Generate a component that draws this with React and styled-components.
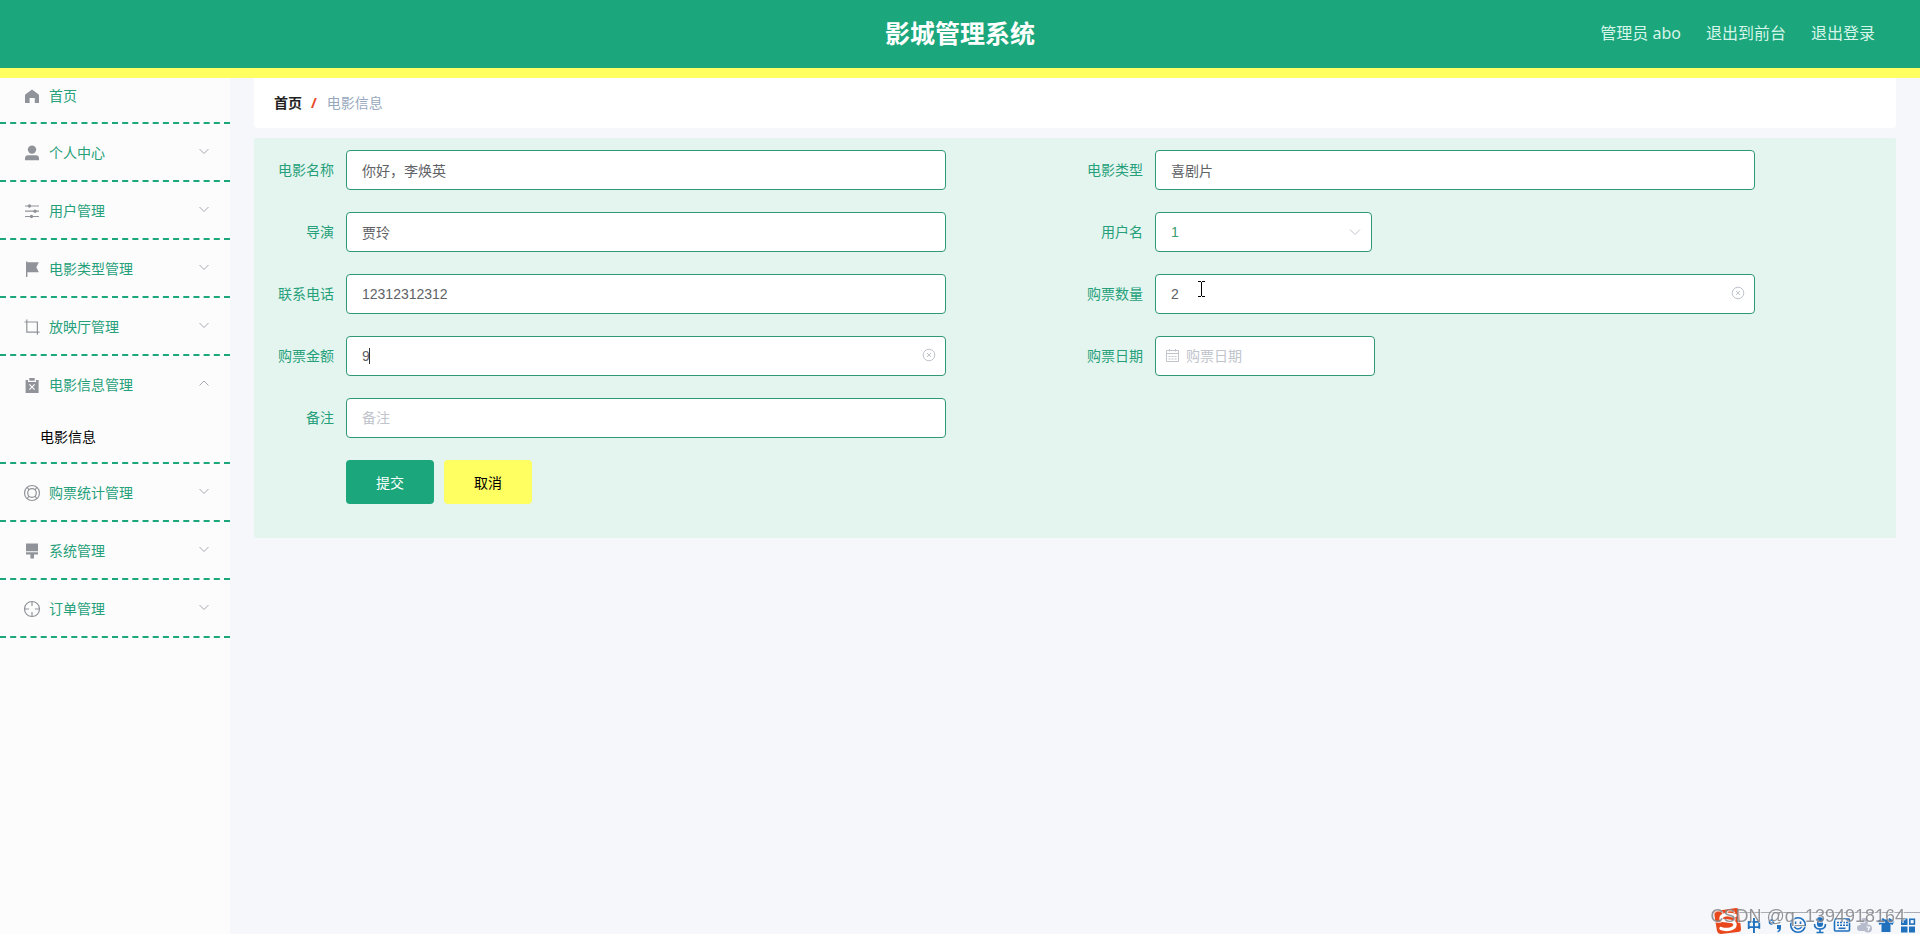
import React from "react";
import styled, { createGlobalStyle } from "styled-components";

const GREEN = "#1ba77b";
const TEXT_GREEN = "#26a07a";
const YELLOW = "#ffff62";

const GlobalStyle = createGlobalStyle`
  *, *::before, *::after { box-sizing: border-box; }
  body {
    margin: 0;
    background: #f5f7fb;
    font-family: "Noto Sans", "Noto Sans CJK SC", sans-serif;
    font-size: 14px;
    color: #303133;
  }
  a { color: inherit; text-decoration: none; }
`;

const Page = styled.div`
  min-height: 100vh;
  display: flex;
  flex-direction: column;
`;

const Header = styled.header`
  display: grid;
  grid-template-columns: 1fr auto 1fr;
  align-items: center;
  height: 78px;
  padding-bottom: 2px;
  background: ${GREEN};
  border-bottom: 10px solid ${YELLOW};
`;

const Title = styled.h1`
  grid-column: 2;
  margin: 0;
  font-size: 25px;
  line-height: 36px;
  font-weight: 700;
  color: #fff;
`;

const HeaderLinks = styled.nav`
  display: flex;
  justify-content: flex-end;
  gap: 25px;
  padding-right: 45px;
  font-size: 16px;
  line-height: 24px;
  color: #d6f5ea;
`;

const Body = styled.div`
  flex: 1;
  display: flex;
`;

const Sidebar = styled.nav`
  flex: none;
  width: 230px;
  background: #fcfcfc;
`;

const MenuGroup = styled.div`
  border-bottom: 2px dashed ${GREEN};
`;

const MenuItem = styled.a`
  display: flex;
  align-items: center;
  gap: 8px;
  height: ${(p) => (p.$first ? 44 : 56)}px;
  padding: ${(p) => (p.$first ? "0 20px 8px 23px" : "2px 20px 0 23px")};
  line-height: 20px;
  color: ${TEXT_GREEN};
`;

const MenuLabel = styled.span`
  flex: 1;
`;

const SubItem = styled.a`
  display: block;
  height: 50px;
  padding-left: 40px;
  line-height: 50px;
  color: #000;
`;

const Icon = styled.svg`
  flex: none;
  display: block;
  width: 18px;
  height: 18px;
  fill: none;
  stroke: #909399;
  stroke-width: 1.2;
`;

const Chevron = styled.svg`
  flex: none;
  display: block;
  width: 12px;
  height: 12px;
  margin-bottom: 4px;
  fill: none;
  stroke: #a6a9b0;
`;

const Main = styled.main`
  flex: 1;
  min-width: 0;
  padding: 0 24px 24px;
`;

const Breadcrumb = styled.nav`
  display: flex;
  align-items: center;
  height: 50px;
  padding: 0 20px;
  background: #fff;
  border-radius: 0 0 4px 4px;
  line-height: 20px;
  color: #97a8be;
`;

const Crumb = styled.a`
  font-weight: 700;
  color: #222;
`;

const Slash = styled.span`
  margin: 0 10px 0 9px;
  font-weight: 700;
  color: #e8492a;
`;

const Form = styled.form`
  display: grid;
  grid-template-columns: 1fr 1fr;
  row-gap: 22px;
  margin-top: 10px;
  padding: 12px 12px 34px;
  background: #e4f5ef;
  border-radius: 2px;
`;

const Field = styled.div`
  display: flex;
`;

const Label = styled.label`
  flex: none;
  width: 80px;
  padding-right: 12px;
  line-height: 40px;
  text-align: right;
  color: ${TEXT_GREEN};
`;

const Control = styled.div`
  position: relative;
  width: ${(p) => p.$width}px;
  max-width: calc(100% - 80px);
`;

const inputFont = `
  font-family: "Liberation Sans", "Noto Sans CJK SC", sans-serif;
  font-size: 14px;
`;

const TextInput = styled.input`
  display: block;
  width: 100%;
  height: 40px;
  padding: 0 30px 0 ${(p) => (p.$prefixed ? 30 : 15)}px;
  ${inputFont}
  color: #606266;
  background: #fff;
  border: 1px solid #2e9877;
  border-radius: 4px;
  outline: none;
  &::placeholder { color: #c0c4cc; opacity: 1; }
`;

const Select = styled.select`
  display: block;
  appearance: none;
  width: 100%;
  height: 40px;
  padding: 0 30px 0 15px;
  ${inputFont}
  color: #3a9c6c;
  background: #fff;
  border: 1px solid #2e9877;
  border-radius: 4px;
  outline: none;
`;

const FieldIcon = styled.svg`
  position: absolute;
  top: 12px;
  ${(p) => p.$side || "right"}: 10px;
  width: 14px;
  height: 14px;
  fill: none;
  stroke: #c0c4cc;
  pointer-events: none;
`;

const Caret = styled.span`
  position: absolute;
  top: 12px;
  left: 23px;
  width: 1px;
  height: 16px;
  background: #333;
`;

const Pointer = styled.svg`
  position: absolute;
  top: 7px;
  left: 43px;
  width: 7px;
  height: 16px;
  fill: none;
  stroke: #000;
`;

const Actions = styled.div`
  grid-column: 1 / -1;
  display: flex;
  gap: 10px;
  padding-left: 80px;
`;

const Button = styled.button`
  width: 88px;
  height: 44px;
  padding: 0;
  border: 0;
  border-radius: 4px;
  font: inherit;
  color: ${(p) => (p.$primary ? "#fff" : "#000")};
  background: ${(p) => (p.$primary ? GREEN : YELLOW)};
`;

const ImeBar = styled.div`
  position: fixed;
  right: 0;
  bottom: 0;
  display: flex;
  align-items: center;
  gap: 4px;
  height: 22px;
  padding: 2px 3px 0 32px;
  border-top: 1px solid #a9adb3;
`;

const ImeLogo = styled.svg`
  position: absolute;
  left: 0;
  bottom: 0;
  width: 28px;
  height: 26px;
`;

const ImeMode = styled.span`
  width: 18px;
  font-size: 15px;
  line-height: 18px;
  font-weight: 700;
  text-align: center;
  color: #1f70bd;
`;

const ImeIcon = styled.svg`
  flex: none;
  width: 18px;
  height: 18px;
  fill: none;
  stroke: #1f70bd;
  stroke-width: 1.6;
`;

const Watermark = styled.span`
  position: fixed;
  right: 15px;
  bottom: 8px;
  font-family: "Liberation Sans", sans-serif;
  font-size: 18px;
  line-height: 20px;
  color: rgba(130, 132, 136, 0.85);
  text-shadow: 1px 1px 0 rgba(255, 255, 255, 0.7);
`;

const solid = { fill: "#909399", stroke: "none" };

const icons = {
  home: <path {...solid} d="M9 2.6 15.4 7.3Q16 7.8 16 8.6V16H11.8V11H6.6V16H2V8.6Q2 7.8 2.6 7.3Z" />,
  user: (
    <g {...solid}>
      <circle cx="9" cy="5.6" r="4.2" />
      <path d="M2 16.2V14.4Q2 11.2 5.2 11.2H12.8Q16 11.2 16 14.4V16.2Z" />
    </g>
  ),
  sliders: (
    <g>
      <path d="M2 4H16M2 9.2H16M2 14.5H16" />
      <g {...solid}>
        <circle cx="6.5" cy="4" r="1.7" />
        <circle cx="12" cy="9.2" r="1.7" />
        <circle cx="8.5" cy="14.5" r="1.7" />
      </g>
    </g>
  ),
  flag: <path {...solid} d="M3 1.5H4.4V17H3ZM4.4 2.2H15.8L13.4 7.2 15.8 12.2H4.4Z" />,
  crop: <path d="M1.5 4H14.4V16.8M3.8 1.6V14.2H16.6" />,
  clipboard: (
    <g>
      <path {...solid} d="M2.6 4H5V6H13V4H15.6V17H2.6ZM6.3 2H11.7V4.8H6.3Z" />
      <path stroke="#fcfcfc" d="M6.4 8.4 11.6 13.6M11.6 8.4 6.4 13.6" />
    </g>
  ),
  help: (
    <g>
      <circle cx="9" cy="9" r="7.5" />
      <circle cx="9" cy="9" r="4.3" />
      <path d="M4.2 3.4 6.2 6M13.8 3.4 11.8 6M4.2 14.6 6.2 12M13.8 14.6 11.8 12" />
    </g>
  ),
  brush: <path {...solid} d="M3 1.5H15V9.2H3ZM3 10.2H15V12.6H11V16.6H7.4V12.6H3Z" />,
  aim: (
    <g>
      <circle cx="9" cy="9" r="7.5" />
      <path d="M9 1.5V6M9 12V16.5M1.5 9H6M12 9H16.5" />
    </g>
  ),
};

const menu = [
  { icon: "home", label: "首页", first: true },
  { icon: "user", label: "个人中心" },
  { icon: "sliders", label: "用户管理" },
  { icon: "flag", label: "电影类型管理" },
  { icon: "crop", label: "放映厅管理" },
  { icon: "clipboard", label: "电影信息管理", children: ["电影信息"] },
  { icon: "help", label: "购票统计管理" },
  { icon: "brush", label: "系统管理" },
  { icon: "aim", label: "订单管理" },
];

function ClearIcon() {
  return (
    <FieldIcon viewBox="0 0 14 14" aria-hidden="true">
      <circle cx="7" cy="7" r="5.8" />
      <path d="M5 5 9 9M9 5 5 9" />
    </FieldIcon>
  );
}

function TextField({ id, label, value, placeholder, clearable, children }) {
  return (
    <Field>
      <Label htmlFor={id}>{label}</Label>
      <Control $width={600}>
        <TextInput id={id} type="text" defaultValue={value} placeholder={placeholder} />
        {clearable && <ClearIcon />}
        {children}
      </Control>
    </Field>
  );
}

function SideMenu() {
  return (
    <Sidebar>
      {menu.map((m) => (
        <MenuGroup key={m.label}>
          <MenuItem href="#" $first={m.first}>
            <Icon viewBox="0 0 18 18" aria-hidden="true">{icons[m.icon]}</Icon>
            <MenuLabel>{m.label}</MenuLabel>
            {!m.first && (
              <Chevron viewBox="0 0 12 12" aria-hidden="true">
                <path d={m.children ? "M1.5 8.5 6 4 10.5 8.5" : "M1.5 4 6 8.5 10.5 4"} />
              </Chevron>
            )}
          </MenuItem>
          {m.children?.map((c) => <SubItem href="#" key={c}>{c}</SubItem>)}
        </MenuGroup>
      ))}
    </Sidebar>
  );
}

function InputMethodBar() {
  return (
    <ImeBar>
      <ImeLogo viewBox="0 0 28 26" aria-hidden="true">
        <path fill="#e8481c" d="M1 5Q0 3 3 3L23 0Q26 0 26 3L28 21Q28 24 25 24L8 26Q5 26 4 23Z" />
        <path fill="none" stroke="#fff" strokeWidth="3.4" strokeLinecap="round" d="M22 7.5C15 5.5 8 6.5 8 10.5C8 14.5 22 11 22 16.5C22 21.5 13 22.5 8 20.5" />
      </ImeLogo>
      <ImeMode>中</ImeMode>
      <ImeIcon viewBox="0 0 18 18" aria-hidden="true">
        <circle cx="4.5" cy="6" r="2" />
        <path fill="#1f70bd" stroke="none" d="M10 9H14V12Q14 15.5 10.5 16.5V15Q12 14.5 12 13H10Z" />
      </ImeIcon>
      <ImeIcon viewBox="0 0 18 18" aria-hidden="true">
        <circle cx="9" cy="9" r="7.3" />
        <path d="M5 10.5Q9 15.5 13 10.5M6.5 5.5V8M11.5 5.5V8" />
      </ImeIcon>
      <ImeIcon viewBox="0 0 18 18" aria-hidden="true">
        <rect x="6" y="1" width="6" height="10" rx="3" fill="#1f70bd" stroke="none" />
        <path d="M3.5 8Q3.5 13 9 13Q14.5 13 14.5 8M9 13V16.5M5.5 16.5H12.5" />
      </ImeIcon>
      <ImeIcon viewBox="0 0 18 18" aria-hidden="true">
        <rect x="1.5" y="3" width="15" height="12" rx="1" />
        <path strokeDasharray="2 1" d="M4 6.5H15M4 9.3H15" />
        <path d="M5.5 12.3H12.5" />
      </ImeIcon>
      <ImeIcon viewBox="0 0 18 18" aria-hidden="true">
        <g fill="#b6bccb" stroke="none">
          <circle cx="9" cy="6" r="4" />
          <rect x="2" y="9" width="10" height="6" rx="3" />
          <circle cx="13" cy="12.5" r="4" />
        </g>
        <path stroke="#fff" strokeWidth="1.2" d="M11.5 11H14.5L13 14.5" />
      </ImeIcon>
      <ImeIcon viewBox="0 0 18 18" aria-hidden="true">
        <path fill="#1f70bd" stroke="none" d="M6 2Q9 5 12 2L17.5 5 15.5 9 13.5 8V16H4.5V8L2.5 9 .5 5Z" />
      </ImeIcon>
      <ImeIcon viewBox="0 0 18 18" aria-hidden="true">
        <path fill="#1f70bd" stroke="none" d="M2 2.5H8.5V9H2ZM2 10.5H8.5V16.5H2ZM10 10.5H16V16.5H10Z" />
        <rect x="10.8" y="3.3" width="4.6" height="4.8" />
      </ImeIcon>
    </ImeBar>
  );
}

export default function App() {
  return (
    <Page>
      <GlobalStyle />
      <Header>
        <Title>影城管理系统</Title>
        <HeaderLinks>
          <span>管理员 abo</span>
          <a href="#">退出到前台</a>
          <a href="#">退出登录</a>
        </HeaderLinks>
      </Header>
      <Body>
        <SideMenu />
        <Main>
          <Breadcrumb>
            <Crumb href="#">首页</Crumb>
            <Slash>/</Slash>
            <span>电影信息</span>
          </Breadcrumb>
          <Form onSubmit={(e) => e.preventDefault()}>
            <TextField id="name" label="电影名称" value="你好，李焕英" />
            <TextField id="type" label="电影类型" value="喜剧片" />
            <TextField id="director" label="导演" value="贾玲" />
            <Field>
              <Label htmlFor="user">用户名</Label>
              <Control $width={217}>
                <Select id="user" defaultValue="1">
                  <option value="1">1</option>
                </Select>
                <FieldIcon viewBox="0 0 14 14" aria-hidden="true">
                  <path d="M2 5.5 7 10.5 12 5.5" />
                </FieldIcon>
              </Control>
            </Field>
            <TextField id="phone" label="联系电话" value="12312312312" />
            <TextField id="count" label="购票数量" value="2" clearable>
              <Pointer viewBox="0 0 7 16" aria-hidden="true">
                <path d="M0 .5H3M4 .5H7M3.5 1V15M0 15.5H3M4 15.5H7" />
              </Pointer>
            </TextField>
            <TextField id="amount" label="购票金额" value="9" clearable>
              <Caret />
            </TextField>
            <Field>
              <Label htmlFor="date">购票日期</Label>
              <Control $width={220}>
                <TextInput id="date" type="text" placeholder="购票日期" $prefixed />
                <FieldIcon $side="left" viewBox="0 0 14 14" aria-hidden="true">
                  <path d="M1.5 2.5H13.5V13.5H1.5ZM1.5 5.5H13.5M4.5 1V3.5M10.5 1V3.5" />
                  <path strokeDasharray="2 1" d="M3.5 8.5H12M3.5 11H12" />
                </FieldIcon>
              </Control>
            </Field>
            <TextField id="remark" label="备注" placeholder="备注" />
            <Actions>
              <Button type="submit" $primary>提交</Button>
              <Button type="button">取消</Button>
            </Actions>
          </Form>
        </Main>
      </Body>
      <InputMethodBar />
      <Watermark>CSDN @q_1394918164</Watermark>
    </Page>
  );
}
